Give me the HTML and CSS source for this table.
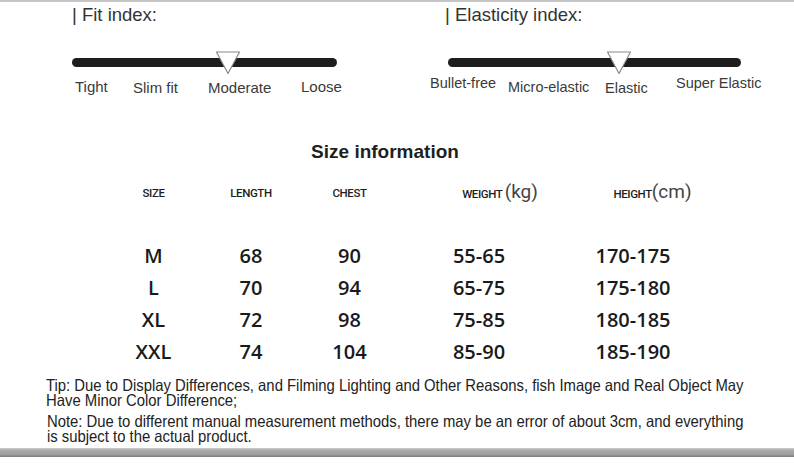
FILE: index.html
```html
<!DOCTYPE html>
<html lang="en">
<head>
<meta charset="utf-8">
<title>Size information</title>
<link rel="stylesheet" href="styles.css">
</head>
<body>
<div class="page">
  <div class="topline"></div>
  <section class="indexes">
    <div class="index fit">
      <h2 class="index-title">| Fit index:</h2>
      <div class="slider">
        <div class="bar"></div>
        <svg class="marker" width="26" height="24" viewBox="0 0 26 24"><polygon points="1.5,1 24.5,1 13,22.5" fill="#ffffff" stroke="#8a8a8a" stroke-width="1.2" stroke-linejoin="round"/></svg>
      </div>
      <div class="scale">
        <span class="d0">Tight</span>
        <span class="d1">Slim fit</span>
        <span class="d1">Moderate</span>
        <span class="d0">Loose</span>
      </div>
    </div>
    <div class="index elastic">
      <h2 class="index-title">| Elasticity index:</h2>
      <div class="slider">
        <div class="bar"></div>
        <svg class="marker" width="26" height="24" viewBox="0 0 26 24"><polygon points="1.5,1 24.5,1 13,22.5" fill="#ffffff" stroke="#8a8a8a" stroke-width="1.2" stroke-linejoin="round"/></svg>
      </div>
      <div class="scale">
        <span class="e0">Bullet-free</span>
        <span class="e4">Micro-elastic</span>
        <span class="e5">Elastic</span>
        <span class="e0">Super Elastic</span>
      </div>
    </div>
  </section>

  <h1 class="size-title">Size information</h1>

  <div class="size-table">
    <div class="th">SIZE</div>
    <div class="th">LENGTH</div>
    <div class="th">CHEST</div>
    <div class="th th-weight">WEIGHT <span class="unit">(kg)</span></div>
    <div class="th th-height">HEIGHT<span class="unit">(cm)</span></div>

    <div class="td">M</div><div class="td">68</div><div class="td">90</div><div class="td">55-65</div><div class="td">170-175</div>
    <div class="td">L</div><div class="td">70</div><div class="td">94</div><div class="td">65-75</div><div class="td">175-180</div>
    <div class="td">XL</div><div class="td">72</div><div class="td">98</div><div class="td">75-85</div><div class="td">180-185</div>
    <div class="td">XXL</div><div class="td">74</div><div class="td">104</div><div class="td">85-90</div><div class="td">185-190</div>
  </div>

  <p class="note tip">Tip: Due to Display Differences, and Filming Lighting and Other Reasons, fish Image and Real Object May Have Minor Color Difference;</p>
  <p class="note measure">Note: Due to different manual measurement methods, there may be an error of about 3cm, and everything is subject to the actual product.</p>

  <div class="bottom-bar"></div>
</div>
</body>
</html>
```

FILE: styles.css
```css
* { box-sizing: border-box; }

html, body {
  margin: 0;
  padding: 0;
  background: #ffffff;
}

body {
  font-family: "Liberation Sans", Arial, sans-serif;
  color: #333333;
  overflow: hidden;
}

.page {
  width: 794px;
  height: 463px;
  overflow: hidden;
}

.topline {
  height: 2px;
  background: #c6c6c6;
}

/* ---------- index sliders ---------- */
.indexes {
  height: 96px;
  padding-left: 72px;
  display: grid;
  grid-template-columns: 358px 1fr;
}

.index-title {
  margin: 2px 0 0 0;
  font-size: 18.5px;
  line-height: 22px;
  font-weight: normal;
  color: #333333;
  white-space: nowrap;
}

.slider {
  position: relative;
  margin-top: 32px;
  height: 9px;
}

.bar {
  height: 9px;
  border-radius: 5px;
  background: #1d1d1d;
}

.marker {
  position: absolute;
  top: -7px;
}

.scale {
  display: grid;
  align-items: start;
  white-space: nowrap;
  color: #3a3a3a;
}

/* Fit index */
.fit .slider { width: 265px; }
.fit .marker { left: 143px; }
.fit .scale {
  margin-top: 11px;
  padding-left: 3px;
  font-size: 15px;
  line-height: 18px;
  grid-template-columns: 58px 75px 93px auto;
}
.d0 { margin-top: 0; }
.d1 { margin-top: 1px; }

/* Elasticity index */
.elastic .index-title { margin-left: 15px; }
.elastic .slider { width: 293px; margin-left: 18px; }
.elastic .marker { left: 158px; }
.elastic .scale {
  margin-top: 7px;
  font-size: 14.5px;
  line-height: 18px;
  grid-template-columns: 78px 97px 71px auto;
}
.e0 { margin-top: 0; }
.e4 { margin-top: 4px; }
.e5 { margin-top: 5px; }

/* ---------- size table ---------- */
.size-title {
  margin: 42px 0 0 0;
  padding-right: 24px;
  text-align: center;
  font-size: 19px;
  line-height: 24px;
  font-weight: bold;
  color: #1f1f1f;
}

.size-table {
  margin: 19px 0 0 100px;
  display: grid;
  grid-template-columns: 107px 88px 109px 150px 158px;
  grid-template-rows: 57px 32px 32px 32px 32px;
}

.th {
  font-family: Roboto, "Liberation Sans", sans-serif;
  font-weight: 500;
  font-size: 11.5px;
  letter-spacing: -0.4px;
  line-height: 20px;
  color: #1e1e1e;
  text-align: center;
  white-space: nowrap;
}

.th-weight { padding-left: 42px; }
.th-height { padding-left: 39px; }

.unit {
  font-family: Roboto, "Liberation Sans", sans-serif;
  font-weight: 400;
  letter-spacing: 0;
  font-size: 19px;
  line-height: 18px;
  color: #444444;
}

.td {
  font-family: "Open Sans", "Noto Sans", sans-serif;
  font-weight: 600;
  font-size: 20px;
  line-height: 32px;
  color: #1a1a1a;
  text-align: center;
}

/* ---------- notes ---------- */
.note {
  margin: 0;
  font-family: "Liberation Sans", Arial, sans-serif;
  font-size: 16.5px;
  line-height: 15px;
  color: #222222;
  transform: scaleX(0.9);
  transform-origin: left top;
}

.tip {
  width: 795px;
  margin-top: 10px;
  margin-left: 46px;
}

.measure {
  width: 780px;
  margin-top: 6px;
  margin-left: 47px;
}

.bottom-bar {
  margin-top: 4px;
  height: 9px;
  background: linear-gradient(#cfcfcf 0%, #a9a9a9 25%, #a0a0a0 70%, #7a7a7a 100%);
}
```
